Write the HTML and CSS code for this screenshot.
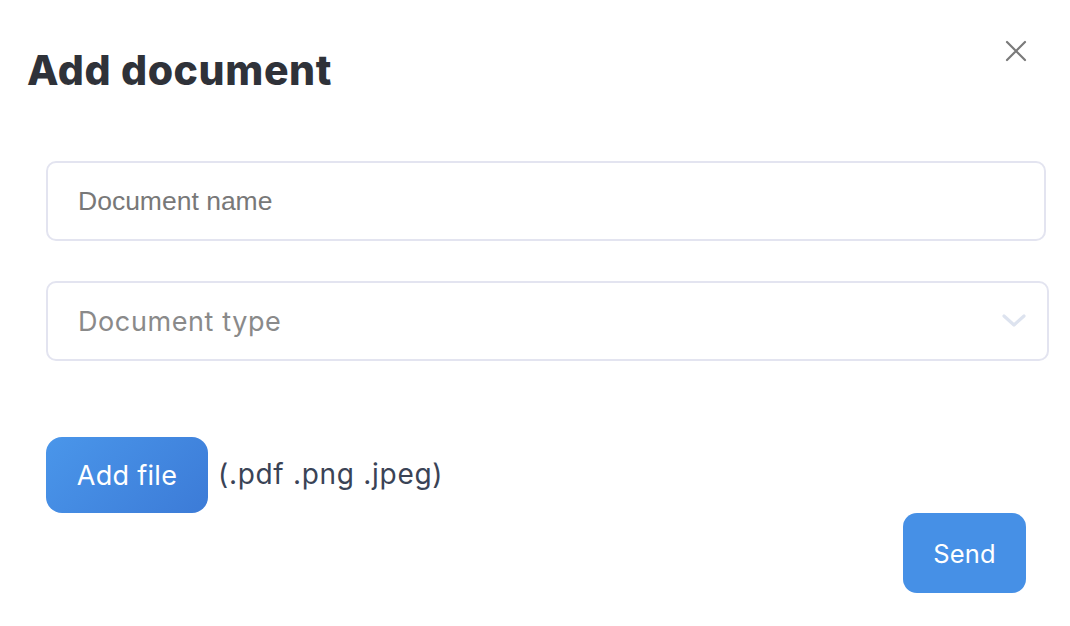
FILE: index.html
```html
<!DOCTYPE html>
<html lang="en">
<head>
    <meta charset="UTF-8">
    <meta name="viewport" content="width=device-width, initial-scale=1.0">
    <title>Add document</title>
    <link rel="stylesheet" href="styles.css">
</head>
<body>
    <div class="modal">
        <div class="header">
            <h1>Add document</h1>
            <button class="close" aria-label="Close">
                <svg width="22" height="22" viewBox="0 0 22 22">
                    <path d="M2 2 L20 20 M20 2 L2 20" stroke="#7a7a7a" stroke-width="2.2" stroke-linecap="round"/>
                </svg>
            </button>
        </div>
        <form class="form">
            <input class="field" type="text" placeholder="Document name">
            <div class="select">
                <span>Document type</span>
                <svg width="26" height="16" viewBox="0 0 26 16">
                    <path d="M3 3 L13 12 L23 3" fill="none" stroke="#dde3ef" stroke-width="3.2" stroke-linecap="round" stroke-linejoin="round"/>
                </svg>
            </div>
            <div class="upload">
                <button type="button" class="addbtn">Add file</button>
                <span class="types">(.pdf .png .jpeg)</span>
            </div>
            <div class="actions">
                <button type="button" class="sendbtn">Send</button>
            </div>
        </form>
    </div>
</body>
</html>
```

FILE: styles.css
```css
body {
    margin: 0;
    background: #fff;
    font-family: "Liberation Sans", Arial, sans-serif;
}
.modal {
    width: 1070px;
    height: 626px;
    box-sizing: border-box;
    padding: 38px 0 0 27px;
}
.header {
    display: flex;
    justify-content: space-between;
    align-items: flex-start;
}
h1 {
    margin: 0;
    font-family: Inter, sans-serif;
    font-weight: 800;
    font-size: 41px;
    letter-spacing: 0.6px;
    color: #2f3239;
    line-height: 64px;
}
.close {
    border: 0;
    background: none;
    padding: 0;
    margin: 2px 43px 0 0;
    width: 22px;
    height: 22px;
    cursor: pointer;
}
.form {
    margin-top: 59px;
    margin-left: 19px;
    width: 1004px;
}
.field, .select {
    box-sizing: border-box;
    width: 1000px;
    height: 80px;
    border: 2px solid #e3e4f0;
    border-radius: 10px;
    padding: 0 30px;
    font-family: "Liberation Sans", Arial, sans-serif;
    font-size: 26.5px;
    color: #7a7a7a;
    outline: none;
    display: block;
}
.field::placeholder {
    color: #787878;
}
.select {
    width: 1003px;
    margin-top: 40px;
    display: flex;
    align-items: center;
    justify-content: space-between;
    padding-right: 20px;
    font-family: Inter, sans-serif;
    font-size: 27px;
    letter-spacing: 0.6px;
    color: #8a8a8a;
}
.upload {
    margin-top: 76px;
    display: flex;
    align-items: center;
}
.addbtn, .sendbtn {
    border: 0;
    color: #fff;
    font-family: Inter, sans-serif;
    cursor: pointer;
}
.addbtn {
    width: 162px;
    height: 76px;
    border-radius: 16px;
    background: linear-gradient(135deg, #4a96ea, #3c7bd7);
    font-size: 27px;
    letter-spacing: 0.3px;
}
.types {
    margin-left: 10px;
    font-family: Inter, sans-serif;
    font-size: 28px;
    letter-spacing: 0.7px;
    color: #3a4356;
    padding-bottom: 2px;
}
.actions {
    display: flex;
    justify-content: flex-end;
    width: 980px;
}
.sendbtn {
    width: 123px;
    height: 80px;
    border-radius: 14px;
    background: #4690e6;
    font-size: 25.5px;
    letter-spacing: 0.2px;
}
```
